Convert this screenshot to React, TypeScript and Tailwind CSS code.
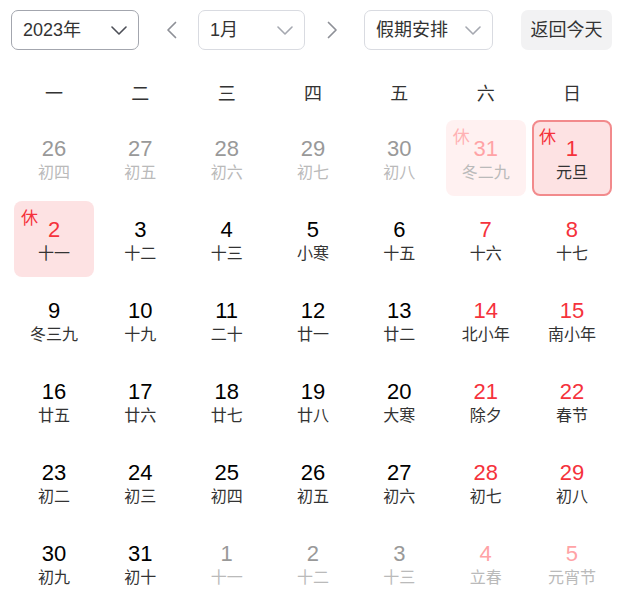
import { useState } from "react";

type Day = {
  d: number;
  lunar: string;
  other?: boolean;
  red?: boolean;
  rest?: boolean;
  selected?: boolean;
};

const weekdays = ["一", "二", "三", "四", "五", "六", "日"];

const days: Day[] = [
  { d: 26, lunar: "初四", other: true },
  { d: 27, lunar: "初五", other: true },
  { d: 28, lunar: "初六", other: true },
  { d: 29, lunar: "初七", other: true },
  { d: 30, lunar: "初八", other: true },
  { d: 31, lunar: "冬二九", other: true, red: true, rest: true },
  { d: 1, lunar: "元旦", red: true, rest: true, selected: true },
  { d: 2, lunar: "十一", red: true, rest: true },
  { d: 3, lunar: "十二" },
  { d: 4, lunar: "十三" },
  { d: 5, lunar: "小寒" },
  { d: 6, lunar: "十五" },
  { d: 7, lunar: "十六", red: true },
  { d: 8, lunar: "十七", red: true },
  { d: 9, lunar: "冬三九" },
  { d: 10, lunar: "十九" },
  { d: 11, lunar: "二十" },
  { d: 12, lunar: "廿一" },
  { d: 13, lunar: "廿二" },
  { d: 14, lunar: "北小年", red: true },
  { d: 15, lunar: "南小年", red: true },
  { d: 16, lunar: "廿五" },
  { d: 17, lunar: "廿六" },
  { d: 18, lunar: "廿七" },
  { d: 19, lunar: "廿八" },
  { d: 20, lunar: "大寒" },
  { d: 21, lunar: "除夕", red: true },
  { d: 22, lunar: "春节", red: true },
  { d: 23, lunar: "初二" },
  { d: 24, lunar: "初三" },
  { d: 25, lunar: "初四" },
  { d: 26, lunar: "初五" },
  { d: 27, lunar: "初六" },
  { d: 28, lunar: "初七", red: true },
  { d: 29, lunar: "初八", red: true },
  { d: 30, lunar: "初九" },
  { d: 31, lunar: "初十" },
  { d: 1, lunar: "十一", other: true },
  { d: 2, lunar: "十二", other: true },
  { d: 3, lunar: "十三", other: true },
  { d: 4, lunar: "立春", other: true, red: true },
  { d: 5, lunar: "元宵节", other: true, red: true },
];

function Chevron({ className }: { className: string }) {
  return (
    <svg width="16" height="9" viewBox="0 0 16 9" fill="none" className={className}>
      <path d="M1 1l7 7 7-7" stroke="currentColor" strokeWidth="1.6" strokeLinecap="round" strokeLinejoin="round" />
    </svg>
  );
}

function Select({ label, width, dark }: { label: string; width: string; dark?: boolean }) {
  return (
    <button
      className={`flex h-[40px] items-center justify-between rounded-[7px] border bg-white pl-[11px] pr-[11px] text-[18px] text-[#333] ${width} ${
        dark ? "border-[#a3a6ae]" : "border-[#d9dbe1]"
      }`}
    >
      <span>{label}</span>
      <Chevron className={dark ? "text-[#4d4f57]" : "text-[#a5a8b0]"} />
    </button>
  );
}

function Arrow({ dir }: { dir: "left" | "right" }) {
  return (
    <button className="flex h-[40px] w-[20px] items-center justify-center text-[#8e9097]">
      <svg width="11" height="18" viewBox="0 0 11 18" fill="none">
        <path
          d={dir === "left" ? "M9.5 1.5L2 9l7.5 7.5" : "M1.5 1.5L9 9l-7.5 7.5"}
          stroke="currentColor"
          strokeWidth="1.7"
          strokeLinecap="round"
          strokeLinejoin="round"
        />
      </svg>
    </button>
  );
}

function Cell({ day }: { day: Day }) {
  let box = "";
  if (day.selected) box = "bg-[#fde2e3] border-2 border-[#f28a8c]";
  else if (day.rest && day.other) box = "bg-[#fff1f1]";
  else if (day.rest) box = "bg-[#fde2e3]";

  let num = "text-black";
  if (day.other) num = day.red ? "text-[#ffa3a6]" : "text-[#999]";
  else if (day.red) num = "text-[#f5323c]";

  const lunar = day.other ? "text-[#bababa]" : "text-[#333]";
  const rest = day.other ? "text-[#ffb2b4]" : "text-[#f5323c]";

  return (
    <div className={`relative flex h-[76px] flex-col items-center rounded-[8px] ${box}`}>
      {day.rest && (
        <span
          className={`absolute text-[17px] leading-none ${rest} ${
            day.selected ? "left-[5px] top-[7px]" : "left-[7px] top-[9px]"
          }`}
        >
          休
        </span>
      )}
      <span className={`text-[22px] leading-[24px] ${num} ${day.selected ? "mt-[15px]" : "mt-[17px]"}`}>
        {day.d}
      </span>
      <span className={`mt-[2px] text-[16px] leading-[20px] ${lunar}`}>{day.lunar}</span>
    </div>
  );
}

export default function App() {
  const [year] = useState("2023年");
  return (
    <div
      className="h-[608px] w-[626px] bg-white"
      style={{ fontFamily: '"Liberation Sans", Arial, "Noto Sans CJK SC", sans-serif' }}
    >
      <div className="flex items-center pl-[11px] pt-[10px]">
        <Select label={year} width="w-[128px]" dark />
        <div className="ml-[22px]">
          <Arrow dir="left" />
        </div>
        <div className="ml-[17px]">
          <Select label="1月" width="w-[107px]" />
        </div>
        <div className="ml-[17px]">
          <Arrow dir="right" />
        </div>
        <div className="ml-[22px]">
          <Select label="假期安排" width="w-[129px]" />
        </div>
        <button className="ml-[28px] h-[40px] w-[91px] rounded-[7px] bg-[#f2f2f3] text-[18px] text-[#333]">
          返回今天
        </button>
      </div>

      <div className="px-[14px]">
        <div className="mt-[24px] grid h-[40px] grid-cols-7 gap-x-[6.33px]">
          {weekdays.map((w) => (
            <div key={w} className="flex items-center justify-center text-[18px] text-[#333]">
              {w}
            </div>
          ))}
        </div>
        <div className="mt-[6px] grid grid-cols-7 gap-x-[6.33px] gap-y-[5px]">
          {days.map((day, i) => (
            <Cell key={i} day={day} />
          ))}
        </div>
      </div>
    </div>
  );
}
